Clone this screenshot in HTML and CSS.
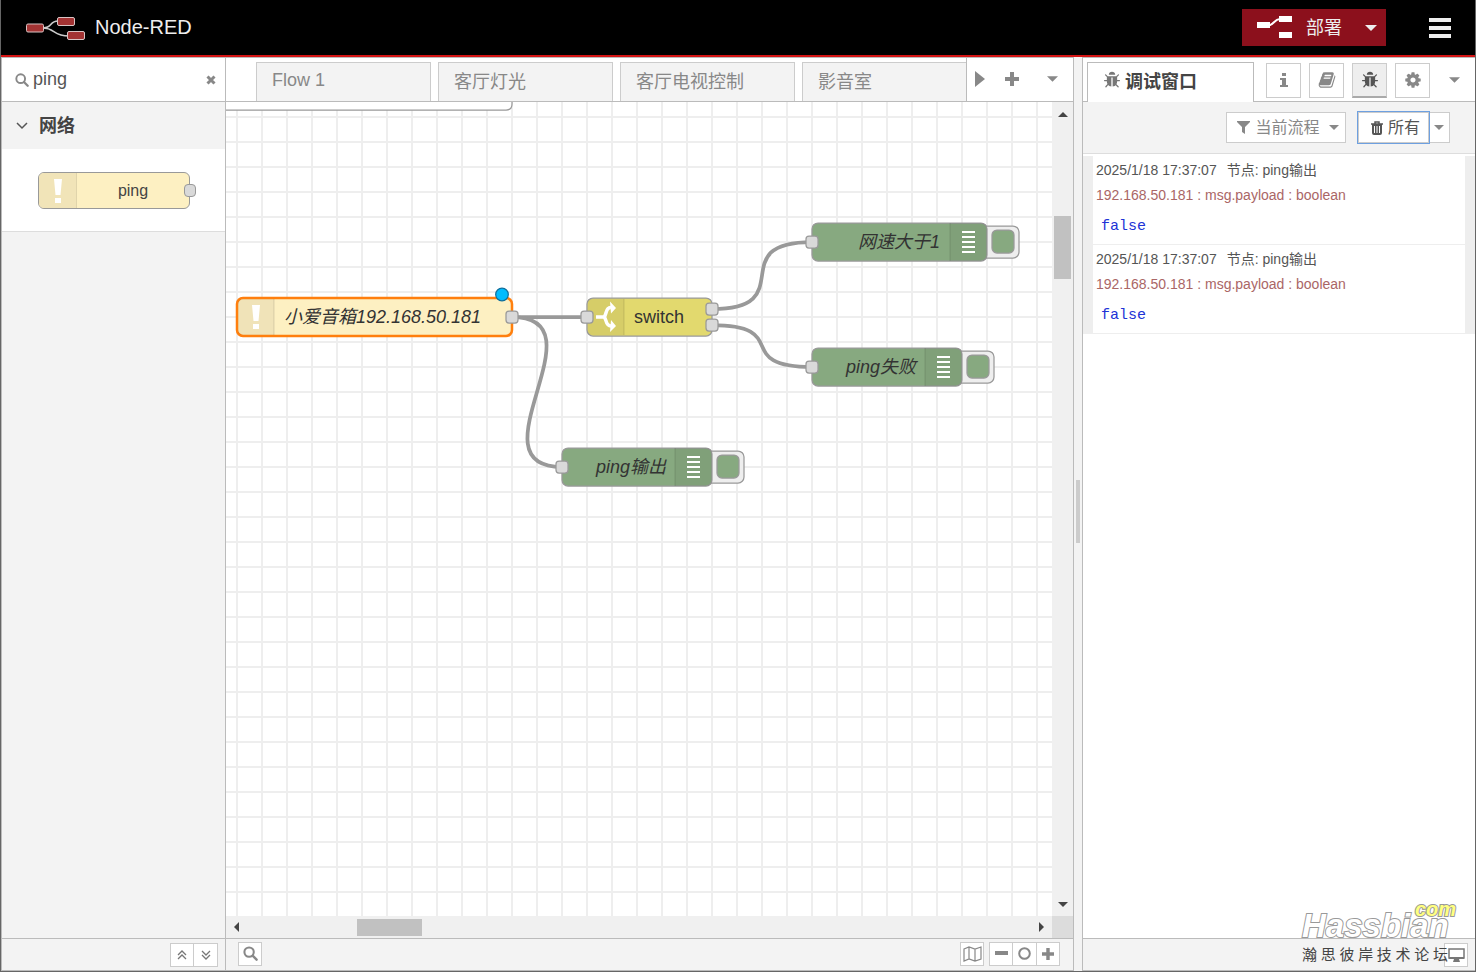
FILE: index.html
```html
<!DOCTYPE html>
<html lang="zh-CN">
<head>
<meta charset="utf-8">
<title>Node-RED</title>
<link rel="stylesheet" href="styles.css">
</head>
<body>
<svg class="defs" aria-hidden="true">
  <symbol id="i-search" viewBox="0 0 16 16"><circle cx="6.5" cy="6.5" r="5" fill="none" stroke="currentColor" stroke-width="2.2"/><path d="M10.500 10.500l4 4" stroke="currentColor" stroke-width="2.6" stroke-linecap="round"/></symbol>
  <symbol id="i-caret" viewBox="0 0 12 6"><path d="M0 0h12L6 6z" fill="currentColor"/></symbol>
  <symbol id="i-plus" viewBox="0 0 14 14"><path d="M7 0v14M0 7h14" stroke="currentColor" stroke-width="4"/></symbol>
  <symbol id="i-bug" viewBox="0 0 1792 1792"><path fill="currentColor" d="M1696 960q0 26-19 45t-45 19h-224q0 171-67 290l208 209q19 19 19 45t-19 45q-18 19-45 19t-45-19l-198-197q-5 5-15 13t-42 28.500-65 36.500-82 29-97 13v-896h-128v896q-51 0-101.500-13.500t-87-33-66-39-43.500-32.500l-15-14-183 207q-20 21-48 21-24 0-43-16-19-18-20.500-44.500t15.500-46.500l202-227q-58-114-58-274h-224q-26 0-45-19t-19-45 19-45 45-19h224v-294l-173-173q-19-19-19-45t19-45 45-19 45 19l173 173h844l173-173q19-19 45-19t45 19 19 45-19 45l-173 173v294h224q26 0 45 19t19 45zm-480-576h-640q0-133 93.500-226.500t226.500-93.500 226.500 93.500 93.500 226.500z"/></symbol>
  <symbol id="i-book" viewBox="0 0 1792 1792"><path fill="currentColor" d="M1703 478q40 57 18 129l-275 906q-19 64-76.500 107.500t-122.500 43.500h-923q-77 0-148.500-53.500t-99.500-131.500q-24-67-2-127 0-4 3-27t4-37q1-8-3-21.500t-3-19.500q2-11 8-21t16.500-23.500 16.500-23.500q23-38 45-91.500t30-91.500q3-10 .5-30t-.5-28q3-11 17-28t17-23q21-36 42-92t25-90q1-9-2.500-32t.5-28q4-13 22-30.500t22-22.500q19-26 42.500-84.500t27.500-96.500q1-8-3-25.500t-2-26.500q2-8 9-18t18-23 17-21q8-12 16.500-30.500t15-35 16-36 19.500-32 26.500-23.500 36-11.500 47.500 5.500l-1 3q38-9 51-9h761q74 0 114 56t18 130l-274 906q-36 119-71.500 153.500t-128.500 34.500h-869q-27 0-38 15-11 16-1 43 24 70 144 70h923q29 0 56-15.500t35-41.500l300-987q7-22 5-57 38 15 59 43zm-1064 2q-4 13 2 22.500t20 9.500h608q13 0 25.500-9.500t16.500-22.500l21-64q4-13-2-22.500t-20-9.500h-608q-13 0-25.500 9.500t-16.500 22.500zm-83 256q-4 13 2 22.500t20 9.500h608q13 0 25.500-9.500t16.500-22.500l21-64q4-13-2-22.500t-20-9.500h-608q-13 0-25.500 9.500t-16.500 22.500z"/></symbol>
  <symbol id="i-cog" viewBox="0 0 1792 1792"><path fill="currentColor" d="M1152 896q0-106-75-181t-181-75-181 75-75 181 75 181 181 75 181-75 75-181zm512-109v222q0 12-8 23t-20 13l-185 28q-19 54-39 91 35 50 107 138 10 12 10 25t-9 23q-27 37-99 108t-94 71q-12 0-26-9l-138-108q-44 23-91 38-16 136-29 186-7 28-36 28h-222q-14 0-24.500-8.500t-11.500-21.500l-28-184q-49-16-90-37l-141 107q-10 9-25 9-14 0-25-11-126-114-165-168-7-10-7-23 0-12 8-23 15-21 51-66.500t54-70.500q-27-50-41-99l-183-27q-13-2-21-12.500t-8-23.500v-222q0-12 8-23t19-13l186-28q14-46 39-92-40-57-107-138-10-12-10-24 0-10 9-23 26-36 98.500-107.500t94.500-71.500q13 0 26 10l138 107q44-23 91-38 16-136 29-186 7-28 36-28h222q14 0 24.500 8.500t11.500 21.500l28 184q49 16 90 37l142-107q9-9 24-9 13 0 25 10 129 119 165 170 7 8 7 22 0 12-8 23-15 21-51 66.500t-54 70.500q26 50 41 98l183 28q13 2 21 12.500t8 23.500z"/></symbol>
  <symbol id="i-bang" viewBox="0 0 10 26"><path fill="#fff" d="M1 1h8L7.500 17h-5zM2 20h6v5H2z"/></symbol>
</svg>

<div class="app">
  <header class="header">
    <div class="brand">
      <svg width="60" height="26" viewBox="0 0 60 26" aria-hidden="true">
        <path d="M18 13c10 0 6-7 15-7M18 13c12 0 10 8 26 8" fill="none" stroke="#ccc" stroke-width="1.600"/>
        <g fill="#a33333" stroke="#d8c4c4"><rect x="1.500" y="9" width="17" height="8" rx="1.500"/><rect x="32.500" y="2.500" width="17" height="8" rx="1.500"/><rect x="42.500" y="16.500" width="17" height="8" rx="1.500"/></g>
      </svg>
      <span>Node-RED</span>
    </div>
    <div class="deploy">
      <button class="deploy-main"><svg width="35" height="23" viewBox="0 0 35 23" aria-hidden="true"><path d="M0 6h13v6H0zM22 0h13v6H22zM22 16h13v6H22z" fill="#fff"/><path d="M12 9c5 0 5-6 11-6" fill="none" stroke="#fff" stroke-width="2"/></svg><span class="cjk">部署</span></button>
      <button class="deploy-menu" aria-label="部署选项"><svg width="12" height="6"><use href="#i-caret"/></svg></button>
    </div>
    <button class="menu" aria-label="菜单"><i></i><i></i><i></i></button>
  </header>

  <main class="main">
    <aside class="palette">
      <label class="search"><svg width="14" height="14"><use href="#i-search"/></svg><input type="text" value="ping" aria-label="过滤节点"><button aria-label="清除"><svg width="10" height="10" viewBox="0 0 10 10"><path d="M1.500 1.500l7 7M8.500 1.500l-7 7" stroke="#888" stroke-width="3"/></svg></button></label>
      <button class="category"><svg width="12" height="8" viewBox="0 0 12 8"><path d="M1 1l5 5 5-5" fill="none" stroke="#555" stroke-width="1.500"/></svg><span class="cjk">网络</span></button>
      <div class="nodes">
        <div class="pnode"><span class="picon"><svg width="10" height="26"><use href="#i-bang"/></svg></span><span class="plabel">ping</span><i class="port"></i></div>
      </div>
      <footer class="foot palette-foot">
        <div class="group">
          <button class="fbtn" aria-label="全部折叠"><svg width="10" height="10" viewBox="0 0 10 10"><path d="M1 5l4-4 4 4M1 9l4-4 4 4" fill="none" stroke="#777" stroke-width="1.300"/></svg></button>
          <button class="fbtn" aria-label="全部展开"><svg width="10" height="10" viewBox="0 0 10 10"><path d="M1 1l4 4 4-4M1 5l4 4 4-4" fill="none" stroke="#777" stroke-width="1.300"/></svg></button>
        </div>
      </footer>
    </aside>

    <section class="workspace">
      <nav class="tabbar">
        <div class="tabs">
          <button class="tab">Flow 1</button><button class="tab">客厅灯光</button><button class="tab">客厅电视控制</button><button class="tab">影音室</button>
        </div>
        <div class="tab-tools">
          <button aria-label="向右滚动"><svg width="10" height="16" viewBox="0 0 10 16"><path d="M0 0l10 8-10 8z" fill="#888"/></svg></button>
          <button aria-label="添加流程"><svg width="14" height="14"><use href="#i-plus"/></svg></button>
          <button aria-label="流程列表"><svg width="11" height="6"><use href="#i-caret"/></svg></button>
        </div>
      </nav>
      <div class="chart">
        <svg class="canvas">
          <defs>
            <pattern id="grid" x="236" y="116" width="25" height="25" patternUnits="userSpaceOnUse"><path d="M1 0v25M0 1h25" stroke="#eee" stroke-width="2"/></pattern>
            <g id="port"><rect x="-6" y="-6" width="12" height="12" rx="3" fill="#d9d9d9" stroke="#999" stroke-width="1.250"/></g>
            <g id="debug-end">
              <rect x="-12" y="4" width="44" height="32" rx="6" fill="#eee" stroke="#999" stroke-width="1.250"/>
              <rect x="5" y="8" width="22" height="23" rx="5" fill="#87a980" stroke="#999" stroke-width="1.250"/>
            </g>
            <g id="debug-icon">
              <path d="M-37 1h31q6 0 6 6v26q0 6-6 6h-31z" fill="#000" fill-opacity=".05"/>
              <path d="M-37 1v38" stroke="#000" stroke-opacity=".12"/>
              <path d="M-25 10h13M-25 15h13M-25 20h13M-25 25h13M-25 30h13" stroke="#fff" stroke-width="2"/>
            </g>
          </defs>
          <g transform="translate(-226 -102)">
            <rect x="226" y="102" width="3000" height="2000" fill="url(#grid)"/>
            <path d="M220 90v20h286q6 0 6-6V90z" fill="#fff" stroke="#999" stroke-width="1.250"/>
            <g fill="none" stroke="#999" stroke-width="3.750">
              <path d="M512 317H587"/>
              <path d="M512 317C606 317 468 467 562 467"/>
              <path d="M712 309C802 309 722 242 812 242"/>
              <path d="M712 325C793 325 731 367 812 367"/>
            </g>
            <rect x="237" y="298" width="275" height="38" rx="6" fill="#fdf0c2" stroke="#ff7f0e" stroke-width="2.500"/>
            <path d="M238 303q0-4 4-4h32v36h-32q-4 0-4-4z" fill="#000" fill-opacity=".05"/>
            <path d="M274 299v36" stroke="#000" stroke-opacity=".12"/>
            <use href="#i-bang" x="251" y="303" width="10" height="28"/>
            <text class="label name" x="284" y="323">小爱音箱192.168.50.181</text>
            <use href="#port" x="512" y="317"/>
            <circle cx="502" cy="294.500" r="6.300" fill="#00bcff" stroke="#0f6f9c" stroke-width="1.250"/>

            <rect x="587" y="298" width="125" height="38" rx="6" fill="#e2d96e" stroke="#999" stroke-width="1.250"/>
            <path d="M588 303q0-4 4-4h32v36h-32q-4 0-4-4z" fill="#000" fill-opacity=".05"/>
            <path d="M624 299v36" stroke="#000" stroke-opacity=".12"/>
            <path d="M596 317h8C607 315 605 307 611 307.500M604 317C607 319 605 326 611 326" fill="none" stroke="#fff" stroke-width="3.500"/>
            <path d="M610 301.500l6 6.500-5 5.500zM610 332l6-6-5-6z" fill="#fff"/>
            <text class="label" x="634" y="323">switch</text>
            <use href="#port" x="587" y="317"/><use href="#port" x="712" y="309"/><use href="#port" x="712" y="325"/>

            <use href="#debug-end" x="987" y="222"/>
            <rect x="812" y="223" width="175" height="38" rx="6" fill="#87a980" stroke="#999" stroke-width="1.250"/>
            <use href="#debug-icon" x="987" y="222"/>
            <text class="label name end" x="940" y="248">网速大于1</text>
            <use href="#port" x="812" y="242"/>

            <use href="#debug-end" x="962" y="347"/>
            <rect x="812" y="348" width="150" height="38" rx="6" fill="#87a980" stroke="#999" stroke-width="1.250"/>
            <use href="#debug-icon" x="962" y="347"/>
            <text class="label name end" x="916" y="373">ping失败</text>
            <use href="#port" x="812" y="367"/>

            <use href="#debug-end" x="712" y="447"/>
            <rect x="562" y="448" width="150" height="38" rx="6" fill="#87a980" stroke="#999" stroke-width="1.250"/>
            <use href="#debug-icon" x="712" y="447"/>
            <text class="label name end" x="666" y="473">ping输出</text>
            <use href="#port" x="562" y="467"/>
          </g>
        </svg>
        <div class="vbar"><svg width="10" height="5" viewBox="0 0 10 5"><path d="M0 5h10L5 0z" fill="#444"/></svg><i></i><svg width="10" height="5" viewBox="0 0 10 5"><path d="M0 0h10L5 5z" fill="#444"/></svg></div>
        <div class="hbar"><svg width="5" height="10" viewBox="0 0 5 10"><path d="M5 0v10L0 5z" fill="#444"/></svg><i></i><svg width="5" height="10" viewBox="0 0 5 10"><path d="M0 0v10l5-5z" fill="#444"/></svg></div>
        <div class="corner"></div>
      </div>
      <footer class="foot work-foot">
        <button class="fbtn" aria-label="搜索"><svg width="15" height="15"><use href="#i-search"/></svg></button>
        <span class="grow"></span>
        <button class="fbtn" aria-label="导航"><svg width="19" height="16" viewBox="0 0 19 16"><path d="M1 3l5-2 6 2 6-2v12l-6 2-6-2-5 2zM6 1v12M12 3v12" fill="none" stroke="#888" stroke-width="1.200"/></svg></button>
        <div class="group">
          <button class="fbtn" aria-label="缩小"><svg width="13" height="13" viewBox="0 0 13 13"><path d="M0 6h13" stroke="#888" stroke-width="4"/></svg></button>
          <button class="fbtn" aria-label="重置缩放"><svg width="13" height="13" viewBox="0 0 13 13"><circle cx="6.500" cy="6.500" r="5.300" fill="none" stroke="#888" stroke-width="2"/></svg></button>
          <button class="fbtn" aria-label="放大"><svg width="12" height="12"><use href="#i-plus"/></svg></button>
        </div>
      </footer>
    </section>

    <div class="separator"><i></i></div>

    <aside class="sidebar">
      <div class="side-tabs">
        <button class="side-tab"><svg width="18" height="18"><use href="#i-bug"/></svg><span>调试窗口</span></button>
        <div class="side-icons">
          <button class="ibtn" aria-label="信息"><svg width="8" height="14" viewBox="0 0 8 14"><path d="M2 0h4v3H2zM0 5h6v7h2v2H0v-2h2V7H0z" fill="currentColor"/></svg></button>
          <button class="ibtn" aria-label="帮助"><svg width="18" height="18"><use href="#i-book"/></svg></button>
          <button class="ibtn on" aria-label="调试"><svg width="18" height="18"><use href="#i-bug"/></svg></button>
          <button class="ibtn" aria-label="配置"><svg width="18" height="18"><use href="#i-cog"/></svg></button>
        </div>
        <button class="side-more" aria-label="更多"><svg width="11" height="6"><use href="#i-caret"/></svg></button>
      </div>
      <div class="toolbar">
        <button class="tbtn filter"><svg width="13" height="13" viewBox="0 0 13 13"><path d="M0 0h13v1L8 6v7l-3-2V6L0 1z" fill="currentColor"/></svg><span class="cjk">当前流程</span><svg class="car" width="10" height="5"><use href="#i-caret"/></svg></button>
        <div class="clear">
          <button class="tbtn all"><svg width="12" height="14" viewBox="0 0 12 14"><path d="M0 3h12M4 3V1h4v2" fill="none" stroke="currentColor" stroke-width="1.500"/><path fill-rule="evenodd" d="M1 3h10v9q0 2-2 2H3q-2 0-2-2zM3 5v7h1V5zM5.500 5v7h1V5zM8 5v7h1V5z" fill="currentColor"/></svg><span class="cjk">所有</span></button>
          <button class="tbtn drop" aria-label="清除选项"><svg width="10" height="5"><use href="#i-caret"/></svg></button>
        </div>
      </div>
      <div class="messages">
        <article class="msg"><div class="meta"><span>2025/1/18 17:37:07</span><span>节点: ping输出</span></div><div class="topic">192.168.50.181 : msg.payload : boolean</div><div class="value">false</div></article>
        <article class="msg"><div class="meta"><span>2025/1/18 17:37:07</span><span>节点: ping输出</span></div><div class="topic">192.168.50.181 : msg.payload : boolean</div><div class="value">false</div></article>
      </div>
      <footer class="foot side-foot"><button class="fbtn" aria-label="打开新窗口"><svg width="17" height="14" viewBox="0 0 17 14"><path d="M1 1h15v9H1z" fill="#fff" stroke="#777" stroke-width="1.500"/><path d="M1 9h15v2H1zM6 11h5l1 3H5z" fill="#777"/></svg></button></footer>
      <div class="watermark"><span class="wm-com">com</span><span class="wm-name">Hassbian</span><span class="wm-cn">瀚思彼岸技术论坛</span></div>
    </aside>
  </main>
</div>
</body>
</html>
```

FILE: styles.css
```css
* { box-sizing: border-box; }
body { margin: 0; font-family: "Liberation Sans", "Noto Sans CJK SC", sans-serif; color: #555; }
button, input { font: inherit; color: inherit; margin: 0; padding: 0; border: 0; background: none; }
button { display: flex; align-items: center; justify-content: center; white-space: nowrap; }
svg { display: block; flex: none; }
.defs { position: absolute; width: 0; height: 0; }
.grow { flex: 1; }
.cjk { padding-bottom: 4px; }

.app { display: flex; flex-direction: column; height: 100vh; border: solid #666; border-width: 0 1px 1px; }
.header { display: flex; align-items: center; flex: none; height: 57px; padding: 0 24px; background: #000; border-bottom: 2px solid #d41313; }
.brand { display: flex; align-items: center; gap: 10px; flex: 1; font-size: 20px; color: #eee; }
.deploy { display: flex; height: 37px; background: #8c101c; color: #eee; font-size: 18px; }
.deploy-main { padding-left: 15px; gap: 14px; }
.deploy-menu { width: 31px; margin-left: 13px; }
.menu { display: flex; flex-direction: column; gap: 4px; width: 22px; margin-left: 43px; }
.menu i { width: 22px; height: 4px; background: #eee; }

.main { display: flex; flex: 1; min-height: 0; background: #f3f3f3; }
.palette { display: flex; flex-direction: column; width: 225px; border: solid #bbb; border-width: 1px 1px 0 1px; }
.search { display: flex; align-items: center; height: 44px; padding: 0 9px 0 13px; background: #fff; border-bottom: 1px solid #bbb; color: #888; }
.search input { flex: 1; min-width: 0; margin-left: 4px; font-size: 18px; color: #555; outline: 0; }
.category { height: 47px; justify-content: flex-start; gap: 11px; padding-left: 14px; font-size: 18px; font-weight: 700; color: #444; }
.nodes { height: 83px; padding: 23px 35px 0 36px; background: #fff; border-bottom: 1px solid #ddd; }
.pnode { position: relative; display: flex; height: 37px; background: #fdf0c2; border: 1px solid #999; border-radius: 6px; }
.picon { display: flex; align-items: center; justify-content: center; width: 38px; background: #f1e4b8; border-right: 1px solid #e0d4ab; border-radius: 5px 0 0 5px; }
.plabel { flex: 1; display: flex; align-items: center; justify-content: center; font-size: 16px; color: #444; }
.port { position: absolute; right: -7px; top: 11px; width: 12px; height: 13px; background: #d9d9d9; border: 1px solid #999; border-radius: 4px; }

.foot { display: flex; align-items: center; flex: none; height: 33px; border-top: 1px solid #bbb; border-bottom: 1px solid #bbb; background: #f3f3f3; }
.fbtn { width: 24px; height: 24px; background: #fff; border: 1px solid #ccc; color: #888; }
.group { display: flex; }
.group .fbtn + .fbtn { border-left: 0; }
.palette-foot { margin-top: auto; justify-content: flex-end; padding-right: 7px; }
.work-foot { gap: 5px; padding: 0 13px 2px 12px; }
.work-foot .group { width: 71px; }
.work-foot .group .fbtn { flex: 1; }

.workspace { display: flex; flex-direction: column; flex: 1; min-width: 0; border: solid #bbb; border-width: 1px 1px 0 0; }
.tabbar { display: flex; flex: none; height: 44px; background: #fff; border-bottom: 1px solid #bbb; }
.tabs { display: flex; align-items: flex-end; gap: 7px; flex: 1; overflow: hidden; padding-left: 30px; }
.tab { flex: none; width: 175px; height: 39px; justify-content: flex-start; padding: 0 0 4px 15px; background: #f3f3f3; border: 1px solid #ccc; border-bottom: 0; font-size: 18px; color: #888; }
.tab-tools { display: flex; width: 107px; border-left: 1px solid #bbb; color: #888; padding-bottom: 2px; }
.tab-tools button { flex: 1; }
.tab-tools button:first-child { flex: 0 0 25px; }
.chart { display: grid; grid-template: 1fr 22px / 1fr 21px; flex: 1; min-height: 0; background: #fff; }
.canvas { width: 100%; height: 100%; overflow: hidden; min-width: 0; min-height: 0; }
.label { font-size: 18px; fill: #333; }
.name { font-style: italic; }
.end { text-anchor: end; }
.vbar, .hbar { display: flex; align-items: center; background: #f0f0f0; }
.vbar { flex-direction: column; padding: 10px 0 9px; }
.vbar i { width: 17px; height: 63px; margin: 99px 0 auto; background: #c1c1c1; }
.hbar { padding: 0 8px; }
.hbar i { width: 65px; height: 17px; margin: 0 auto 0 118px; background: #c1c1c1; }
.corner { background: #dcdcdc; }

.separator { display: flex; align-items: center; justify-content: center; width: 8px; }
.separator i { width: 4px; height: 63px; margin-bottom: 5px; background: #ccc; }

.sidebar { position: relative; display: flex; flex-direction: column; width: 393px; background: #fff; border: solid #bbb; border-width: 1px 0 0 1px; }
.side-tabs { display: flex; flex: none; height: 44px; padding: 4px 15px 0 4px; border-bottom: 1px solid #bbb; color: #888; }
.side-tab { width: 167px; height: 40px; gap: 4px; justify-content: flex-start; padding: 0 0 5px 15px; background: #fff; border: 1px solid #bbb; border-bottom: 0; font-size: 18px; font-weight: 700; color: #444; }
.side-tab svg { color: #777; }
.side-icons { display: flex; gap: 8px; flex: 1; padding: 1px 0 0 12px; }
.ibtn { width: 35px; height: 35px; padding-bottom: 2px; background: #fff; border: 1px solid #ccc; }
.ibtn.on { padding-bottom: 0; background: #eee; border-bottom: 2px solid #aaa; color: #555; }
.side-more { height: 36px; }
.toolbar { display: flex; align-items: center; justify-content: flex-end; gap: 12px; flex: none; height: 52px; padding-right: 25px; background: #f3f3f3; border-bottom: 1px solid #ddd; }
.tbtn { height: 31px; gap: 5px; background: #fff; border: 1px solid #ccc; font-size: 16px; color: #888; }
.filter { width: 120px; padding-left: 4px; }
.car { margin-left: 4px; }
.clear { display: flex; }
.all { width: 71px; padding-left: 4px; color: #555; outline: 1px solid #6ea0e0; z-index: 1; }
.drop { width: 21px; border-left: 0; }
.messages { flex: 1; padding-top: 2px; }
.msg { height: 89px; padding: 3px 3px 0; border: solid #eee; border-width: 0 10px 1px; font-size: 14px; }
.meta { display: flex; gap: 10px; height: 22px; line-height: 22px; }
.topic { height: 28px; line-height: 28px; color: #a66; }
.value { height: 35px; padding-left: 5px; line-height: 35px; font-family: "Liberation Mono", monospace; font-size: 15px; color: #2033d6; }
.side-foot { justify-content: flex-end; padding-right: 7px; }

.watermark { position: absolute; right: 19px; bottom: 6px; display: flex; flex-direction: column; width: 154px; color: #fff; -webkit-text-stroke: 2px #999; paint-order: stroke fill; }
.wm-com { align-self: flex-end; height: 13px; line-height: 11px; font-size: 20px; font-weight: 700; font-style: italic; color: #ffff80; }
.wm-name { height: 28px; line-height: 18px; font-size: 33px; font-weight: 700; font-style: italic; }
.wm-cn { width: 146px; height: 20px; line-height: 20px; font-size: 15px; color: #444; text-align: justify; text-align-last: justify; -webkit-text-stroke: 0; }
```
